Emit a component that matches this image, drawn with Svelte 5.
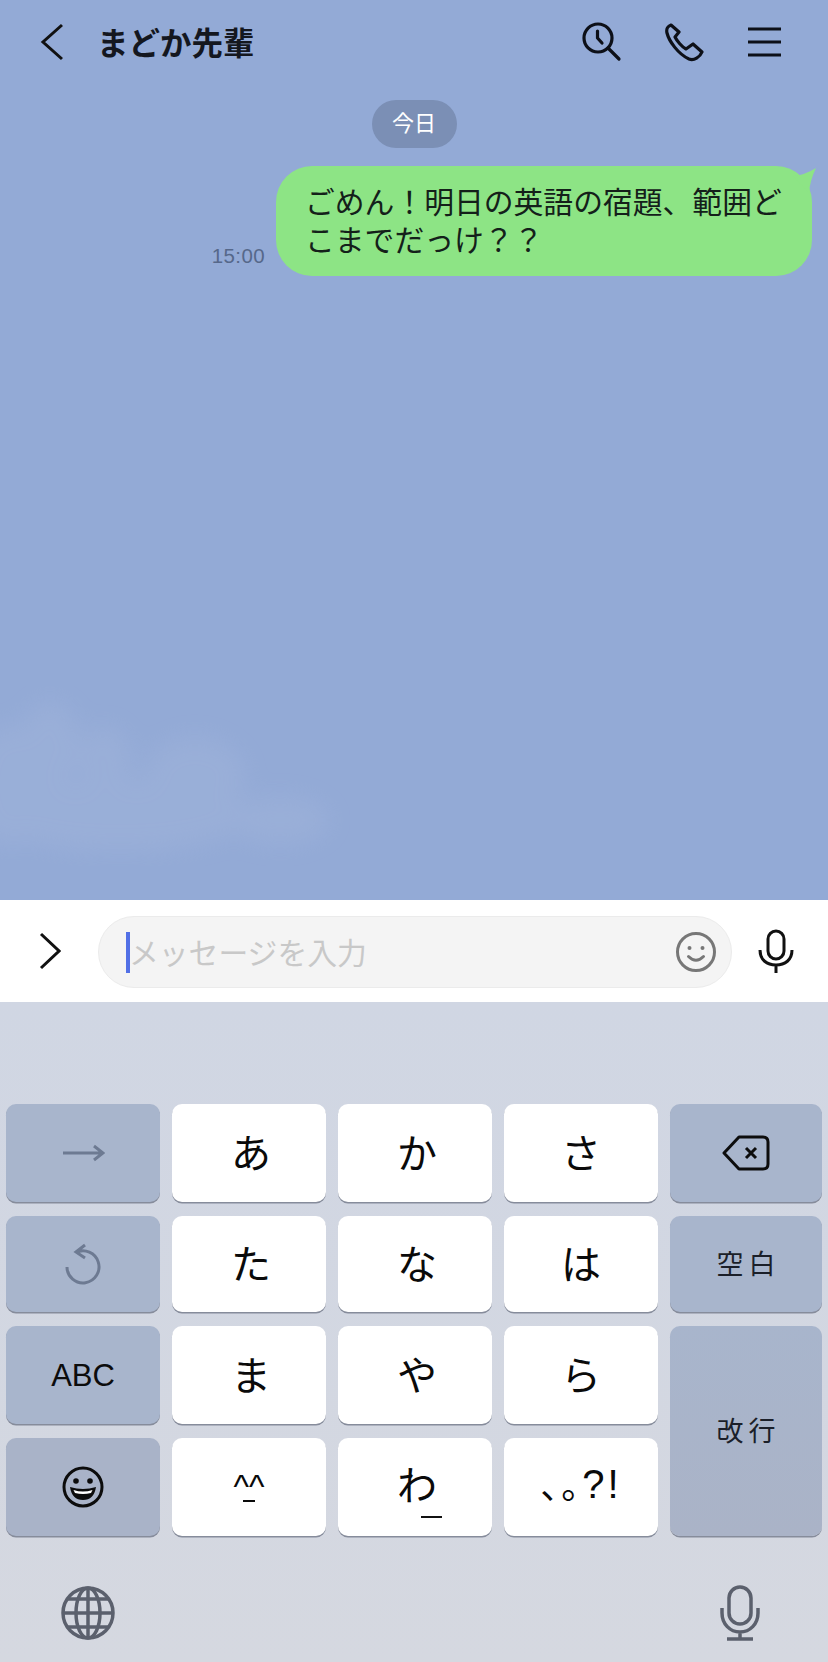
<script>
  const kana = [
    { t: 'あ', c: 2, r: 1 }, { t: 'か', c: 3, r: 1 }, { t: 'さ', c: 4, r: 1 },
    { t: 'た', c: 2, r: 2 }, { t: 'な', c: 3, r: 2 }, { t: 'は', c: 4, r: 2 },
    { t: 'ま', c: 2, r: 3 }, { t: 'や', c: 3, r: 3 }, { t: 'ら', c: 4, r: 3 }
  ];
</script>

<div class="app">
  <section class="chat">
    <svg class="cloud" viewBox="0 0 360 220" width="360" height="220" aria-hidden="true">
      <defs><filter id="soft"><feGaussianBlur stdDeviation="12" /></filter></defs>
      <g fill="#a3b6dc" filter="url(#soft)" opacity="0.42">
        <ellipse cx="8" cy="115" rx="36" ry="60" />
        <ellipse cx="50" cy="75" rx="30" ry="44" />
        <ellipse cx="105" cy="90" rx="26" ry="34" />
        <ellipse cx="195" cy="105" rx="50" ry="38" />
        <ellipse cx="120" cy="145" rx="130" ry="36" />
        <ellipse cx="280" cy="150" rx="50" ry="24" />
      </g>
    </svg>

    <header class="head">
      <svg class="back" width="24" height="38" viewBox="0 0 24 38"><path d="M22 2 L3 19 L22 36" /></svg>
      <h1>まどか先輩</h1>
      <div class="actions">
        <svg width="40" height="40" viewBox="0 0 40 40">
          <circle cx="16" cy="16" r="14" /><path d="M15.5 9 V16 L20 21 M26 26 L37 37" />
        </svg>
        <svg width="40" height="40" viewBox="-2 -2 40 40">
          <path d="M5 1 C2 2 0 5 1 9 C3 17 12 30 23 35 C28 37 34 33 36 28 L27 20 L20 25 C16 23 11 17 9 13 L13 8 Z" />
        </svg>
        <svg width="36" height="32" viewBox="0 0 36 32"><path d="M2 3 H35 M2 16 H35 M2 29 H35" /></svg>
      </div>
    </header>

    <div class="pill">今日</div>

    <div class="row">
      <time>15:00</time>
      <div class="bubble">
        ごめん！明日の英語の宿題、範囲どこまでだっけ？？
        <svg class="tail" width="24" height="30" viewBox="0 0 24 30"><path d="M0 10 Q12 9 23 2 Q17 14 16 27 Z" /></svg>
      </div>
    </div>
  </section>

  <section class="bar">
    <svg class="more" width="22" height="38" viewBox="0 0 22 38"><path d="M2 2 L20 19 L2 36" /></svg>
    <div class="field">
      <span class="caret"></span>
      <span class="hint">メッセージを入力</span>
      <svg class="smile" width="42" height="42" viewBox="0 0 42 42">
        <circle cx="21" cy="21" r="18.5" /><circle class="dot" cx="14.5" cy="17" r="2" /><circle class="dot" cx="27.5" cy="17" r="2" />
        <path d="M13.5 25.5 Q21 33 28.500 25.500" />
      </svg>
    </div>
    <svg class="voice" width="36" height="44" viewBox="0 0 36 44">
      <rect x="10" y="2" width="16" height="28" rx="8" /><path d="M2 21 C2 31 9 36 18 36 C27 36 34 31 34 21 M18 36 V44" />
    </svg>
  </section>

  <section class="keyboard">
    <div class="keys">
      <div class="key fn a1">
        <svg width="44" height="20" viewBox="0 0 44 20" class="dim"><path d="M2 10 H41 M33 3 L42 10 L33 17" /></svg>
      </div>
      <div class="key fn a2">
        <svg width="38" height="42" viewBox="0 0 38 42" class="dim"><path d="M12 9.500 A16 16 0 1 1 3 24 M21 2 L12 9 L21 15" /></svg>
      </div>
      <div class="key fn a3 abc">ABC</div>
      <div class="key fn a4">
        <svg width="42" height="42" viewBox="0 0 42 42" class="face">
          <circle cx="21" cy="21" r="19" /><circle class="ink" cx="14" cy="15" r="2.800" /><circle class="ink" cx="28" cy="15" r="2.800" />
          <path class="ink" d="M8 21 Q21 25 34 21 Q32 34 21 34 Q10 34 8 21 Z" /><path class="tooth" d="M11.500 24 Q21 27 30.500 24 L29 27 Q21 29 13 27 Z" />
        </svg>
      </div>

      {#each kana as k}
        <div class="key kana" class:nudge={k.c < 4} style="grid-column:{k.c};grid-row:{k.r}">{k.t}</div>
      {/each}

      <div class="key smile-key"><span class="carets">^^<i></i></span></div>
      <div class="key kana nudge wa"><span>わ<i></i></span></div>
      <div class="key punct"><span>、</span><span>。</span><b>?!</b></div>

      <div class="key fn e1">
        <svg width="48" height="36" viewBox="0 0 48 36" class="ink-line">
          <path d="M2 18 L17 2 H41 Q46 2 46 7 V29 Q46 34 41 34 H17 Z" /><path d="M24 13 L34 23 M34 13 L24 23" />
        </svg>
      </div>
      <div class="key fn e2 cjk">空白</div>
      <div class="key fn e3 cjk">改行</div>
    </div>

    <div class="sys">
      <svg width="56" height="56" viewBox="0 0 56 56">
        <circle cx="28" cy="28" r="25" /><ellipse cx="28" cy="28" rx="12" ry="25" />
        <path d="M28 3 V53 M3 28 H53 M7 14 H49 M7 42 H49" />
      </svg>
      <svg width="40" height="56" viewBox="0 0 40 56">
        <rect x="9" y="2" width="22" height="37" rx="11" /><path d="M2 23 V28 C2 39 10 47 20 47 C30 47 38 39 38 28 V23 M20 47 V54 M7 54 H33" />
      </svg>
    </div>
  </section>
</div>

<style>
  :global(body) { margin: 0; }
  .app {
    width: 828px;
    height: 1662px;
    display: flex;
    flex-direction: column;
    overflow: hidden;
    font-family: "Noto Sans CJK JP", "Liberation Sans", sans-serif;
    color: #111;
  }
  svg { display: block; fill: none; flex: none; }

  .chat {
    position: relative;
    height: 900px;
    display: flex;
    flex-direction: column;
    background: #93aad6;
    overflow: hidden;
  }
  .cloud { position: absolute; left: 0; bottom: 10px; }
  .head {
    position: relative;
    height: 84px;
    display: flex;
    align-items: center;
    padding: 0 46px 0 40px;
  }
  .back path, .more path { stroke: #111; stroke-width: 3; }
  h1 {
    margin: -2px 0 0 33px;
    font-size: 31.500px;
    font-weight: 700;
    line-height: 40px;
    color: #14171f;
  }
  .actions { margin-left: auto; display: flex; align-items: center; gap: 42px; }
  .actions svg { stroke: #0d1018; stroke-width: 3.200; stroke-linecap: round; stroke-linejoin: round; }
  .actions svg:last-child { stroke-linecap: butt; }
  .pill {
    position: relative;
    align-self: center;
    margin-top: 16px;
    width: 85px;
    height: 48px;
    border-radius: 24px;
    background: #7b8fb5;
    color: #fff;
    font-size: 22px;
    line-height: 43px;
    text-align: center;
  }
  .row {
    position: relative;
    margin-top: 18px;
    padding-right: 16px;
    display: flex;
    justify-content: flex-end;
    align-items: flex-end;
    gap: 11px;
  }
  time {
    font-size: 20.500px;
    line-height: 28px;
    padding-bottom: 6px;
    color: #56688a;
    font-family: "Liberation Sans", sans-serif;
    letter-spacing: 0.400px;
  }
  .bubble {
    position: relative;
    box-sizing: border-box;
    width: 536px;
    height: 110px;
    padding: 15px 20px 0 29px;
    border-radius: 36px;
    background: #8de485;
    font-size: 29.800px;
    line-height: 38px;
    color: #14201a;
  }
  .tail { position: absolute; right: -5px; top: 0; }
  .tail path { fill: #8de485; }

  .bar {
    height: 102px;
    box-sizing: border-box;
    padding: 2px 32px 0 39px;
    display: flex;
    align-items: center;
    background: #fff;
  }
  .more { margin-top: -2px; }
  .field {
    margin-left: 37px;
    box-sizing: border-box;
    width: 634px;
    height: 72px;
    padding: 0 14px 0 27px;
    display: flex;
    align-items: center;
    border: 1px solid #ebebeb;
    border-radius: 36px;
    background: #f4f4f4;
  }
  .caret { width: 4px; height: 41px; background: #5270e6; flex: none; }
  .hint { font-size: 29.800px; line-height: 40px; margin: -3px 0 0 -1px; color: #c8c8c8; }
  .smile { margin-left: auto; }
  .smile circle { stroke: #777; stroke-width: 3; }
  .smile .dot { fill: #777; stroke: none; }
  .smile path { stroke: #777; stroke-width: 3; stroke-linecap: round; }
  .voice { margin: -2px 0 0 26px; }
  .voice rect, .voice path { stroke: #111; stroke-width: 3; }

  .keyboard {
    flex: 1;
    display: flex;
    flex-direction: column;
    background: linear-gradient(#d0d6e3, #d5d8e0);
  }
  .keys {
    margin-top: 102px;
    margin-left: 6px;
    display: grid;
    grid-template-columns: repeat(4, 154px) 152px;
    grid-template-rows: 98px 96px 98px 98px;
    gap: 14px 12px;
  }
  .key {
    position: relative;
    display: flex;
    align-items: center;
    justify-content: center;
    border-radius: 10px;
    background: #fff;
    box-shadow: 0 1.500px 0.500px #868c9b;
  }
  .fn { background: #a8b5cc; }
  .a1 { grid-column: 1; grid-row: 1; }
  .a2 { grid-column: 1; grid-row: 2; }
  .a3 { grid-column: 1; grid-row: 3; }
  .a4 { grid-column: 1; grid-row: 4; background: #a9b3c8; }
  .e1 { grid-column: 5; grid-row: 1; }
  .e2 { grid-column: 5; grid-row: 2; }
  .e3 { grid-column: 5; grid-row: 3 / span 2; background: linear-gradient(#a8b5cc, #aab3c7); }
  .smile-key { grid-column: 2; grid-row: 4; }
  .wa { grid-column: 3; grid-row: 4; }
  .punct { grid-column: 4; grid-row: 4; }
  .dim path { stroke: #6d7a92; stroke-width: 3; }
  .abc { font-family: "Liberation Sans", sans-serif; font-size: 31px; padding-top: 2px; color: #0c0c0c; }
  .cjk { font-size: 27px; letter-spacing: 5px; text-indent: 5px; padding-bottom: 4px; color: #1b1f29; }
  .kana { font-size: 40px; padding-bottom: 5px; color: #0a0a0a; }
  .kana.nudge { padding-left: 4px; }
  .key.wa { padding-bottom: 8px; }
  .wa span { position: relative; }
  .wa i {
    position: absolute;
    left: 24px;
    bottom: -6px;
    width: 21px;
    height: 2px;
    background: #111;
  }
  .carets {
    position: relative;
    font-family: "Liberation Sans", sans-serif;
    font-size: 33px;
    line-height: 30px;
    color: #0a0a0a;
  }
  .carets i {
    position: absolute;
    left: 9px;
    right: 9px;
    bottom: 0;
    height: 2px;
    background: #0a0a0a;
  }
  .punct { font-size: 36px; color: #0a0a0a; }
  .punct span { width: 21px; overflow: visible; white-space: nowrap; letter-spacing: -15px; margin-bottom: 8px; }
  .punct b { font-family: "Liberation Sans", sans-serif; font-weight: 400; font-size: 40px; margin-top: -5px; letter-spacing: 3px; }
  .face circle:first-child { stroke: #0c0c0c; stroke-width: 3; }
  .face .ink { fill: #0c0c0c; }
  .face .tooth { fill: #fff; }
  .ink-line path { stroke: #0d0d0d; stroke-width: 3; stroke-linejoin: round; }

  .sys {
    margin-top: 49px;
    padding: 0 68px 0 60px;
    display: flex;
    justify-content: space-between;
    align-items: center;
  }
  .sys svg * { stroke: #5b606d; stroke-width: 3.500; }
</style>
